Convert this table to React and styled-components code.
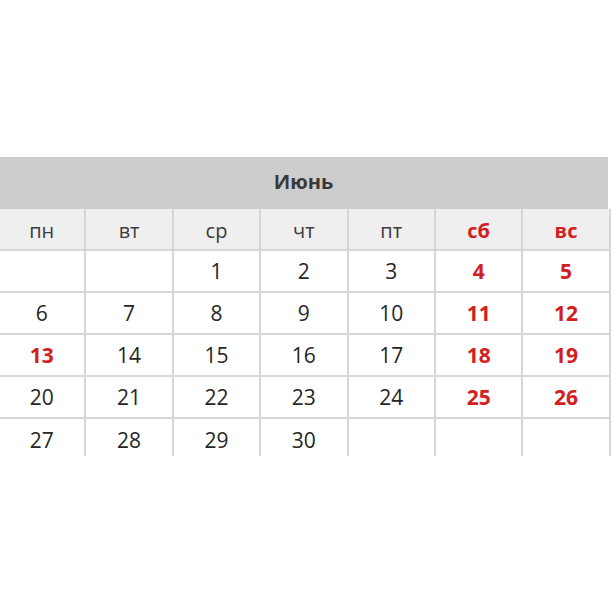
import React from 'react'
import styled, { createGlobalStyle } from 'styled-components'

const GlobalStyle = createGlobalStyle`
    html, body {
        margin: 0;
        padding: 0;
        background: #ffffff;
    }
    body {
        font-family: "Open Sans", "Noto Sans", sans-serif;
    }
`

const days = ['пн', 'вт', 'ср', 'чт', 'пт', 'сб', 'вс']

const weeks = [
    [null, null, 1, 2, 3, 4, 5],
    [6, 7, 8, 9, 10, 11, 12],
    [13, 14, 15, 16, 17, 18, 19],
    [20, 21, 22, 23, 24, 25, 26],
    [27, 28, 29, 30, null, null, null],
]

const holidays = [13]

const App = () => {
    return (
        <Page>
            <GlobalStyle />
            <Calendar>
                <Month>Июнь</Month>
                <Grid>
                    {days.map((d, i) => (
                        <DayName key={d} $weekend={i > 4}>{d}</DayName>
                    ))}
                    {weeks.map((week, w) =>
                        week.map((n, i) => (
                            <DateCell
                                key={`${w}-${i}`}
                                $weekend={n !== null && (i > 4 || holidays.includes(n))}
                                $last={w === weeks.length - 1}
                            >
                                {n}
                            </DateCell>
                        ))
                    )}
                </Grid>
            </Calendar>
        </Page>
    )
}

const Page = styled.main`
    width: 612px;
    height: 612px;
    overflow: hidden;
    padding-top: 157px;
    box-sizing: border-box;
`

const Calendar = styled.section`
    width: 612px;
    margin-left: -1px;
`

const Month = styled.div`
    width: 609px;
    height: 52px;
    box-sizing: border-box;
    padding-bottom: 4px;
    display: flex;
    align-items: center;
    justify-content: center;
    background: #cdcdcd;
    color: #3a3a3a;
    font-size: 20px;
    font-weight: 700;
`

const Grid = styled.div`
    display: grid;
    grid-template-columns: repeat(7, 87.4px);
`

const Cell = styled.div`
    box-sizing: border-box;
    display: flex;
    align-items: center;
    justify-content: center;
    border-right: 2px solid #d6d6d6;
    font-size: 21px;
`

const DayName = styled(Cell)`
    height: 42px;
    padding-top: 3px;
    border-bottom: 2px solid #d6d6d6;
    background: #efefef;
    color: ${p => (p.$weekend ? '#d2201e' : '#3c3c3c')};
    font-weight: ${p => (p.$weekend ? 700 : 400)};
    font-size: 20px;
`

const DateCell = styled(Cell)`
    height: ${p => (p.$last ? '37px' : '42px')};
    border-bottom: ${p => (p.$last ? 'none' : '2px solid #d6d6d6')};
    background: #ffffff;
    color: ${p => (p.$weekend ? '#d2201e' : '#262626')};
    font-weight: ${p => (p.$weekend ? 700 : 400)};
    padding-top: ${p => (p.$last ? '4px' : '0')};
`

export default App
